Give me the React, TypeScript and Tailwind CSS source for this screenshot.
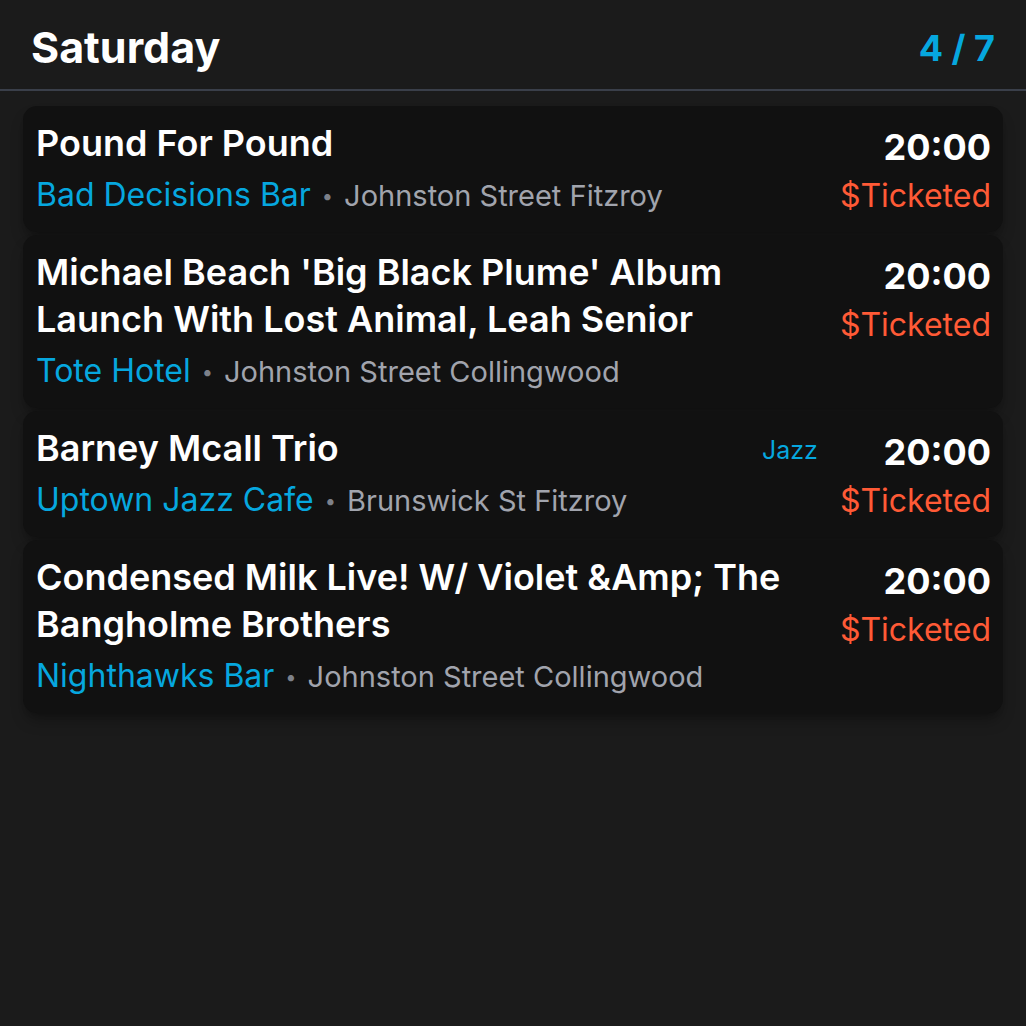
const events = [
  {
    title: "Pound For Pound",
    venue: "Bad Decisions Bar",
    address: "Johnston Street Fitzroy",
    genre: "",
    time: "20:00",
  },
  {
    title: "Michael Beach 'Big Black Plume' Album Launch With Lost Animal, Leah Senior",
    venue: "Tote Hotel",
    address: "Johnston Street Collingwood",
    genre: "",
    time: "20:00",
  },
  {
    title: "Barney Mcall Trio",
    venue: "Uptown Jazz Cafe",
    address: "Brunswick St Fitzroy",
    genre: "Jazz",
    time: "20:00",
  },
  {
    title: "Condensed Milk Live! W/ Violet &Amp; The Bangholme Brothers",
    venue: "Nighthawks Bar",
    address: "Johnston Street Collingwood",
    genre: "",
    time: "20:00",
  },
];

export default function App() {
  return (
    <div className="min-h-screen bg-[#1b1b1b] font-['Inter',sans-serif] text-white">
      <div className="flex h-[91px] items-center justify-between border-b-2 border-[#3a3f4a] pl-[31px] pr-[31px] pt-[6px]">
        <h1 className="text-[43px] font-bold">Saturday</h1>
        <span className="text-[36px] font-bold text-[#06a7df]">4 / 7</span>
      </div>

      <div className="flex flex-col gap-[3px] px-[23px] pt-[15px]">
        {events.map((e, i) => (
          <div
            key={i}
            className="flex rounded-[14px] bg-[#111111] pb-[14px] pl-[13px] pr-[12px] pt-[14px] shadow-lg shadow-black/30"
          >
            <div className="min-w-0 flex-1">
              <p className="text-[36px] font-semibold leading-[47px]">{e.title}</p>
              <p className="mt-[6px] text-[32px] leading-[44px]">
                <span className="text-[#06a7df]">{e.venue}</span>
                <span className="mx-[11px] align-[3px] text-[20px] text-[#7d818a]">•</span>
                <span className="text-[29px] text-[#a1a4ad]">{e.address}</span>
              </p>
            </div>
            {e.genre && (
              <span className="ml-[20px] mt-[2px] shrink-0 text-[25px] leading-[47px] text-[#06a7df]">
                {e.genre}
              </span>
            )}
            <div className="ml-[22px] flex shrink-0 flex-col items-end pt-[2px]">
              <span className="text-[36px] font-bold leading-[50px]">{e.time}</span>
              <span className="mt-[2px] text-[32px] leading-[44px] text-[#ff5a36]">$Ticketed</span>
            </div>
          </div>
        ))}
      </div>
    </div>
  );
}
